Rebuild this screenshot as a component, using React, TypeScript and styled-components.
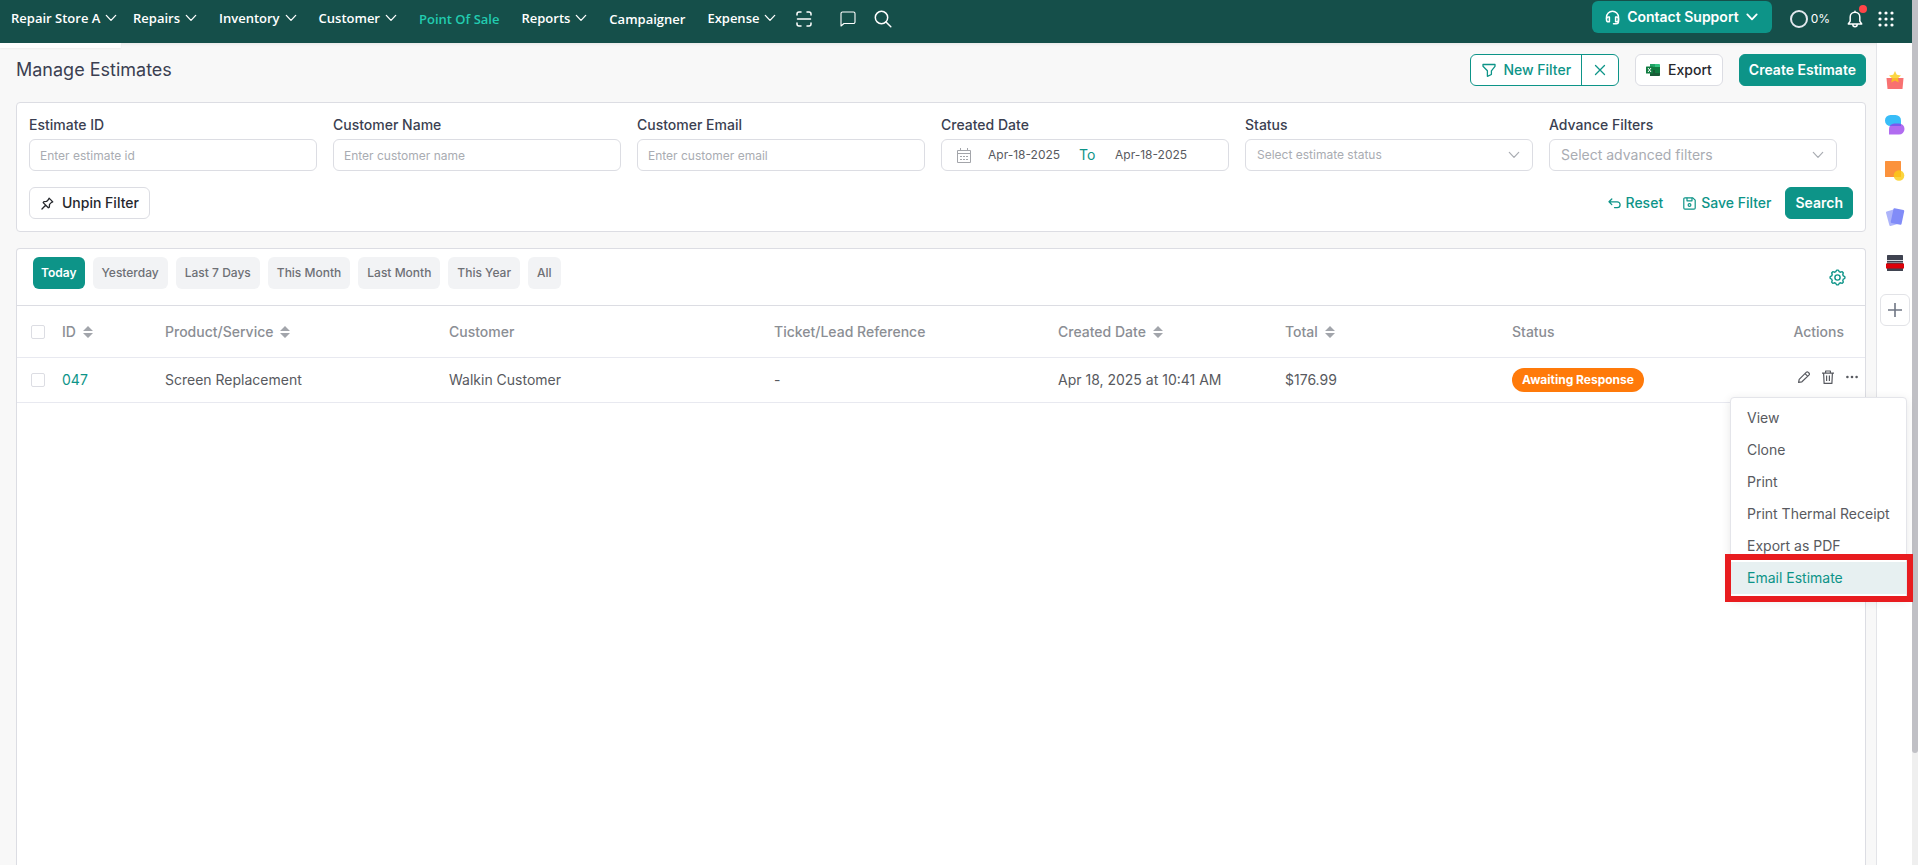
import React from "react";
import styled, { createGlobalStyle, css } from "styled-components";

const color = {
  bar: "#154f4a",
  teal: "#0d9488",
  mint: "#22ccb0",
  page: "#f8f8f8",
  line: "#dcdde3",
  rowLine: "#e8e9f0",
  label: "#3b3f51",
  text: "#585a60",
  head: "#8b8e94",
  hint: "#a9acb2",
};

const GlobalStyle = createGlobalStyle`
  *, *::before, *::after { box-sizing: border-box; }
  body {
    margin: 0;
    background: ${color.page};
    color: ${color.text};
    font-family: Inter, "Liberation Sans", sans-serif;
    font-size: 14px;
    line-height: 20px;
  }
  button, input, select { font: inherit; color: inherit; margin: 0; }
  button { cursor: pointer; }
  a { text-decoration: none; color: inherit; }
  svg { display: block; flex: none; }
`;

/* ---------- frame ---------- */

const Frame = styled.div`
  display: flex;
  height: 100vh;
  overflow: hidden;
`;

const Screen = styled.div`
  flex: 1;
  min-width: 0;
  display: flex;
  flex-direction: column;
`;

const ScrollTrack = styled.div`
  width: 6px;
  background: #efefef;
`;

const ScrollThumb = styled.div`
  height: 87%;
  background: #c0c0c5;
  border-radius: 0 0 3px 3px;
`;

const Body = styled.div`
  flex: 1;
  display: flex;
  min-height: 0;
`;

const Main = styled.main`
  flex: 1;
  min-width: 0;
  display: flex;
  flex-direction: column;
  padding: 11px 10px 0 16px;
`;

/* ---------- top bar ---------- */

const TopBar = styled.header`
  height: 43px;
  flex: none;
  display: flex;
  background: ${color.bar};
  color: #fff;
  box-shadow: 0 1px 3px rgba(0, 0, 0, 0.08);
`;

const Store = styled.div`
  position: relative;
  display: flex;
  width: 121px;
  padding-left: 11px;

  &::after {
    content: "";
    position: absolute;
    left: 0;
    right: 0;
    top: 100%;
    height: 5px;
    background: #fdfdfd;
    box-shadow: 0 1px 2px rgba(0, 0, 0, 0.05);
  }
`;

const Nav = styled.nav`
  flex: 1;
  display: flex;
  gap: 22px;
  padding-left: 12px;
`;

const navItem = css`
  display: flex;
  align-items: center;
  gap: 5px;
  height: 36px;
  padding: 0;
  border: 0;
  background: none;
  font-family: "Open Sans", "Noto Sans", sans-serif;
  font-size: 13px;
  line-height: 18px;
  font-weight: 600;
  white-space: nowrap;
`;

const NavButton = styled.button`
  ${navItem}
  color: #fff;
`;

const NavLink = styled.a<{ $active?: boolean }>`
  ${navItem}
  height: 38px;
  color: ${(p) => (p.$active ? color.mint : "#fff")};
`;

const NavTools = styled.div`
  display: flex;
  align-items: center;
  height: 38px;
  margin-left: -2px;
`;

const NavTool = styled.button<{ $gap: number }>`
  padding: 0;
  margin-right: ${(p) => p.$gap}px;
  border: 0;
  background: none;
  color: #fff;
`;

const BarEnd = styled.div`
  display: flex;
  align-items: center;
  height: 38px;
  padding-right: 18px;
`;

const Support = styled.button`
  display: flex;
  align-items: center;
  gap: 7px;
  height: 32px;
  margin: -4px 18px 0 0;
  padding: 0 14px 0 13px;
  border: 0;
  border-radius: 6px;
  background: ${color.teal};
  color: #fff;
  font-weight: 600;
`;

const Usage = styled.div`
  display: flex;
  align-items: center;
  gap: 3px;
  margin-right: 17px;
  font-size: 12px;
`;

const UsageRing = styled.span`
  width: 18px;
  height: 18px;
  border: 2px solid #e3e8ee;
  border-radius: 50%;
`;

const BellButton = styled.button`
  position: relative;
  margin-right: 15px;
  padding: 0;
  border: 0;
  background: none;
  color: #fff;
`;

const BellDot = styled.span`
  position: absolute;
  top: -5px;
  right: -4px;
  width: 8px;
  height: 8px;
  border-radius: 50%;
  background: #ff4548;
`;

const BareButton = styled.button`
  display: flex;
  align-items: center;
  justify-content: center;
  padding: 0;
  border: 0;
  background: none;
`;

/* ---------- title row ---------- */

const TitleRow = styled.div`
  display: flex;
  align-items: center;
  gap: 16px;
  margin-bottom: 16px;
`;

const Title = styled.h1`
  flex: 1;
  margin: 0;
  font-size: 18px;
  line-height: 24px;
  font-weight: 400;
  color: ${color.label};
`;

const Button = styled.button<{ $kind?: "solid" | "plain" | "text" }>`
  display: flex;
  align-items: center;
  gap: 8px;
  height: 32px;
  padding: 0 10px;
  border: 1px solid ${color.line};
  border-radius: 6px;
  background: #fff;
  color: #26282d;
  font-weight: 500;
  white-space: nowrap;

  ${(p) =>
    p.$kind === "solid" &&
    css`
      padding: 0 9px;
      border-color: ${color.teal};
      background: ${color.teal};
      color: #fff;
      font-weight: 600;
    `}
  ${(p) =>
    p.$kind === "text" &&
    css`
      gap: 5px;
      padding: 0 5px;
      border-color: transparent;
      background: none;
      color: ${color.teal};
    `}
`;

const SplitGroup = styled.div`
  display: flex;
  height: 32px;
  border: 1px solid ${color.teal};
  border-radius: 6px;
  background: #fff;
  color: ${color.teal};
  overflow: hidden;
`;

const SplitButton = styled.button`
  display: flex;
  align-items: center;
  gap: 7px;
  padding: 0 10px 0 11px;
  border: 0;
  background: none;
  font-weight: 500;

  & + & {
    width: 37px;
    padding: 0;
    justify-content: center;
    border-left: 1px solid ${color.teal};
  }
`;

/* ---------- filters ---------- */

const Panel = styled.section`
  border: 1px solid ${color.line};
  border-radius: 4px;
  background: #fff;
`;

const FilterPanel = styled(Panel)`
  padding: 12px;
  margin-bottom: 16px;
`;

const FilterGrid = styled.div`
  display: grid;
  grid-template-columns: repeat(6, 1fr);
`;

const Field = styled.div`
  min-width: 0;
  padding-right: 16px;
`;

const Label = styled.label`
  display: block;
  margin-bottom: 4px;
  color: ${color.label};
  font-weight: 500;
`;

const box = css`
  width: 100%;
  height: 32px;
  border: 1px solid ${color.line};
  border-radius: 6px;
  background: #fff;
`;

const TextInput = styled.input`
  ${box}
  display: block;
  padding: 0 10px;
  font-size: 12px;

  &::placeholder {
    color: ${color.hint};
    opacity: 1;
  }
`;

const SelectWrap = styled.div`
  display: grid;
  align-items: center;
  color: ${color.hint};

  > * {
    grid-area: 1 / 1;
  }
  > svg {
    justify-self: end;
    margin-right: 13px;
    pointer-events: none;
  }
`;

const Select = styled.select<{ $size: number }>`
  ${box}
  appearance: none;
  padding: 0 11px;
  font-size: ${(p) => p.$size}px;
  color: ${color.hint};
`;

const DateBox = styled.div`
  ${box}
  display: flex;
  align-items: center;
  padding-left: 15px;
`;

const DateInput = styled.input`
  width: 75px;
  margin-left: 17px;
  padding: 0;
  border: 0;
  background: none;
  font-size: 12px;
`;

const DateTo = styled.span`
  width: 19px;
  margin-left: 16px;
  color: ${color.teal};
`;

const FilterActions = styled.div`
  display: flex;
  align-items: center;
  gap: 8px;
  margin-top: 16px;
`;

const Spacer = styled.div`
  flex: 1;
`;

/* ---------- table ---------- */

const TablePanel = styled(Panel)`
  flex: 1;
  border-bottom: 0;
  border-radius: 4px 4px 0 0;
`;

const RangeRow = styled.div`
  display: flex;
  align-items: flex-start;
  gap: 8px;
  height: 57px;
  padding: 8px 16px 0;
  border-bottom: 1px solid ${color.line};
`;

const Range = styled.button<{ $active?: boolean }>`
  height: 32px;
  padding: 0 ${(p) => (p.$active ? 8 : 9)}px;
  border: 0;
  border-radius: 6px;
  background: ${(p) => (p.$active ? color.teal : "#f2f3f5")};
  color: ${(p) => (p.$active ? "#fff" : "#6e7076")};
  font-size: 12px;
  font-weight: ${(p) => (p.$active ? 600 : 500)};
`;

const Settings = styled(BareButton)`
  margin: 12px 3px 0 auto;
  color: ${color.teal};
`;

const Table = styled.table`
  width: 100%;
  table-layout: fixed;
  border-collapse: separate;
  border-spacing: 0;
`;

const Th = styled.th`
  height: 52px;
  padding: 0;
  border-bottom: 1px solid ${color.rowLine};
  color: ${color.head};
  font-weight: 500;
  text-align: left;
`;

const Td = styled.td`
  height: 45px;
  padding: 0;
  border-bottom: 1px solid ${color.rowLine};
`;

const HeadLabel = styled.span<{ $end?: boolean }>`
  display: flex;
  align-items: center;
  gap: 7px;
  justify-content: ${(p) => (p.$end ? "flex-end" : "flex-start")};
  padding-right: ${(p) => (p.$end ? 21 : 0)}px;
`;

const Check = styled.input`
  display: block;
  appearance: none;
  width: 14px;
  height: 14px;
  margin: 0 0 0 14px;
  border: 1px solid ${color.line};
  border-radius: 2px;
  background: #fff;
`;

const IdLink = styled.a`
  color: ${color.teal};
`;

const Badge = styled.span`
  display: inline-block;
  padding: 0 10px;
  border-radius: 12px;
  background: #ff7a0a;
  color: #fff;
  font-size: 12px;
  line-height: 24px;
  font-weight: 700;
  vertical-align: middle;
`;

const RowActions = styled.div`
  position: relative;
  display: flex;
  justify-content: flex-end;
  gap: 12px;
  padding: 0 7px 6px 0;
`;

const Menu = styled.ul`
  position: absolute;
  top: 27px;
  right: -42px;
  z-index: 2;
  width: 177px;
  margin: 0;
  padding: 4px 0;
  border: 1px solid #e4e5ea;
  border-radius: 4px;
  background: #fff;
  box-shadow: 0 2px 10px rgba(0, 0, 0, 0.1);
  list-style: none;
`;

const MenuItem = styled.li`
  position: relative;
`;

const MenuButton = styled.button<{ $active?: boolean }>`
  display: block;
  width: 100%;
  height: 32px;
  padding: 0 16px;
  border: 0;
  background: ${(p) => (p.$active ? "#e7f0f1" : "none")};
  color: ${(p) => (p.$active ? color.teal : color.text)};
  text-align: left;
  white-space: nowrap;
`;

const Highlight = styled.span`
  position: absolute;
  inset: -8px -7px -8px -6px;
  border: 6px solid #e81c1f;
  pointer-events: none;
`;

/* ---------- right rail ---------- */

const Rail = styled.aside`
  width: 36px;
  flex: none;
  display: flex;
  flex-direction: column;
  align-items: center;
  gap: 16px;
  padding: 21px 0 0 1px;
  border-left: 1px solid #e3e4e8;
  background: #fff;
`;

const RailButton = styled.button<{ $boxed?: boolean }>`
  display: flex;
  align-items: center;
  justify-content: center;
  width: 30px;
  height: ${(p) => (p.$boxed ? 32 : 30)}px;
  padding: 0;
  border: ${(p) => (p.$boxed ? "1px solid #e2e3e7" : "0")};
  border-radius: 6px;
  background: none;
  color: #6f7684;
`;

/* ---------- icons ---------- */

const Chevron = ({ w = 12, s = 1.3 }: { w?: number; s?: number }) => (
  <svg width={w} height={w} viewBox="0 0 12 12" fill="none" stroke="currentColor" strokeWidth={s} strokeLinecap="round" strokeLinejoin="round">
    <path d="M1.3 3.4 6 8.4l4.7-5" />
  </svg>
);

const ScanIcon = () => (
  <svg width="16" height="16" viewBox="0 0 16 16" fill="none" stroke="currentColor" strokeWidth="1.5" strokeLinecap="round">
    <path d="M1 4V3a2 2 0 0 1 2-2h2M11 1h2a2 2 0 0 1 2 2v1M15 12v1a2 2 0 0 1-2 2h-2M5 15H3a2 2 0 0 1-2-2v-1M1.5 8h13" />
  </svg>
);

const CommentIcon = () => (
  <svg width="16" height="16" viewBox="0 0 16 16" fill="none" stroke="currentColor" strokeWidth="1.1" strokeLinejoin="round">
    <path d="M1 15V2.5A1.5 1.5 0 0 1 2.5 1h11A1.5 1.5 0 0 1 15 2.5V11a1.5 1.5 0 0 1-1.5 1.5H4z" />
  </svg>
);

const SearchIcon = () => (
  <svg width="18" height="18" viewBox="0 0 18 18" fill="none" stroke="currentColor" strokeWidth="1.5" strokeLinecap="round">
    <circle cx="7.5" cy="7.5" r="6.2" />
    <path d="m12 12 4.8 4.8" />
  </svg>
);

const HeadsetIcon = () => (
  <svg width="15" height="15" viewBox="0 0 15 15" fill="none" stroke="currentColor" strokeWidth="1.5" strokeLinecap="round" strokeLinejoin="round">
    <path d="M1.5 8.5V7.2a6 6 0 0 1 12 0v4.3a2.2 2.2 0 0 1-2.2 2.2H8.5" />
    <path d="M1.5 9c0-1.2.9-2 2-2h.9v4.8h-.9c-1.2 0-2-.8-2-1.8zM13.5 9c0-1.2-.9-2-2-2h-.9v4.8h.9c1.2 0 2-.8 2-1.8z" />
  </svg>
);

const BellIcon = () => (
  <svg width="16" height="18" viewBox="0 0 16 18" fill="none" stroke="currentColor" strokeWidth="1.5" strokeLinejoin="round" strokeLinecap="round">
    <path d="M8 1.2v1M8 2.2A4.8 4.8 0 0 0 3.2 7v4.2L1.3 14h13.4l-1.9-2.8V7A4.8 4.8 0 0 0 8 2.2zM5.8 14.5a2.2 2.2 0 0 0 4.4 0" />
  </svg>
);

const AppsIcon = () => (
  <svg width="16" height="16" viewBox="0 0 16 16" fill="#fff">
    {[2, 8, 14].map((y) => [2, 8, 14].map((x) => <circle key={`${x}-${y}`} cx={x} cy={y} r="1.6" />))}
  </svg>
);

const FunnelIcon = () => (
  <svg width="14" height="14" viewBox="0 0 14 14" fill="none" stroke="currentColor" strokeWidth="1.3" strokeLinejoin="round">
    <path d="M1 1.5h12v1.8L9.4 7.8v3.7l-4 1.8V7.8L1 3.3z" />
  </svg>
);

const CloseIcon = () => (
  <svg width="12" height="12" viewBox="0 0 12 12" fill="none" stroke="currentColor" strokeWidth="1.3" strokeLinecap="round">
    <path d="m1.5 1.5 9 9M10.5 1.5l-9 9" />
  </svg>
);

const ExcelIcon = () => (
  <svg width="14" height="12" viewBox="0 0 14 12">
    <path d="M4 0h5v6H4z" fill="#21a366" />
    <path d="M9 0h4.2a.8.8 0 0 1 .8.8V3H9z" fill="#33c481" />
    <path d="M9 3h5v3H9zM4 3h5v3H4z" fill="#107c41" />
    <path d="M4 6h10v5.2a.8.8 0 0 1-.8.8H4z" fill="#185c37" />
    <path d="M9 6h5v3H9z" fill="#107c41" />
    <rect y="2.5" width="7" height="7" rx=".6" fill="#107c41" />
    <path d="m2 4 3 4M5 4 2 8" stroke="#fff" strokeWidth="1" />
  </svg>
);

const CalendarIcon = () => (
  <svg width="14" height="15" viewBox="0 0 14 15" fill="none" stroke="#a3a5aa" strokeWidth="1">
    <path d="M.5 2.5h13v12H.5zM.5 5.5h13M3.5 0v3M10.5 0v3" />
    <path d="M3 8.500h2M6 8.500h2M9 8.500h2M3 11.500h2M6 11.500h2M9 11.500h2" />
  </svg>
);

const PinIcon = () => (
  <svg width="14" height="14" viewBox="-1 -1 15 15" fill="none" stroke="currentColor" strokeWidth="1.4" strokeLinejoin="round" strokeLinecap="round">
    <path d="M8.7 1.3 12.7 5.3 11.3 5.8 9.2 8 9 10.9 7.9 11.6 2.4 6.1 3.2 5.1 6 4.8 8.1 2.7zM5 9l-3.9 3.9" />
  </svg>
);

const UndoIcon = () => (
  <svg width="13" height="11" viewBox="0 0 13 11" fill="none" stroke="currentColor" strokeWidth="1.3" strokeLinecap="round" strokeLinejoin="round">
    <path d="M3.8 1 1 3.8l2.8 2.8M1 3.8h8.2a2.9 2.9 0 0 1 0 5.8H6.5" />
  </svg>
);

const SaveIcon = () => (
  <svg width="13" height="13" viewBox="0 0 13 13" fill="none" stroke="currentColor" strokeWidth="1.2" strokeLinejoin="round">
    <path d="M.8 2A1.2 1.2 0 0 1 2 .8h7.8l2.4 2.4V11a1.2 1.2 0 0 1-1.2 1.2H2A1.2 1.2 0 0 1 .8 11z" />
    <path d="M4 .8v3h5v-3" />
    <circle cx="6.5" cy="8" r="1.4" />
  </svg>
);

const SortIcon = () => (
  <svg width="10" height="12" viewBox="0 0 10 12" fill="#a2a5ab">
    <path d="M5 0 10 5H0zM5 12 0 7h10z" />
  </svg>
);

const gearPath = Array.from({ length: 64 }, (_, i) => {
  const a = (i / 64) * Math.PI * 2;
  const r = 6.7 + 0.7 * Math.max(-1, Math.min(1, 2 * Math.cos(a * 8)));
  return `${i ? "L" : "M"}${(8.5 + r * Math.sin(a)).toFixed(2)} ${(8.5 - r * Math.cos(a)).toFixed(2)}`;
}).join("");

const GearIcon = () => (
  <svg width="17" height="17" viewBox="0 0 17 17" fill="none" stroke="currentColor" strokeWidth="1.4" strokeLinejoin="round">
    <path d={`${gearPath}Z`} />
    <circle cx="8.5" cy="8.5" r="2.6" />
  </svg>
);

const PencilIcon = () => (
  <svg width="12" height="14" viewBox="1 0 12 14" fill="none" stroke="currentColor" strokeWidth="1.2" strokeLinejoin="round">
    <path d="m1.6 12.4.6-3 7-7a1.5 1.5 0 0 1 2.1 0l.6.6a1.5 1.5 0 0 1 0 2.1l-7 6.7zM8 3.6l2.6 2.6" />
  </svg>
);

const TrashIcon = () => (
  <svg width="12" height="14" viewBox="0 0 12 14" fill="none" stroke="currentColor" strokeWidth="1.2" strokeLinejoin="round">
    <path d="M0 3.2h12M3.6 3.2V1h4.8v2.2M1.6 3.2l.5 10.2h7.8l.5-10.2M4.6 5.5V11M7.4 5.5V11" />
  </svg>
);

const DotsIcon = () => (
  <svg width="12" height="14" viewBox="0 0 12 14" fill="currentColor">
    <circle cx="1.4" cy="7" r="1.3" />
    <circle cx="6" cy="7" r="1.3" />
    <circle cx="10.6" cy="7" r="1.3" />
  </svg>
);

const StarBagIcon = () => (
  <svg width="18" height="22" viewBox="0 0 18 22">
    <path d="M.5 10h17l-1 11h-15z" fill="#f87171" />
    <path d="m9 3 1.8 3.8 4.2.6-3 2.9.7 4.2-3.7-2-3.7 2 .7-4.2-3-2.9 4.2-.6z" fill="#facc15" opacity=".8" />
  </svg>
);

const ChatsIcon = () => (
  <svg width="20" height="22" viewBox="0 0 20 22">
    <path d="M5.5 1h5A5.5 5.5 0 0 1 16 6.5V12H5.5a5.5 5.5 0 0 1 0-11z" fill="#38bdf8" />
    <path d="M4 20.5V15a5.5 5.5 0 0 1 5.5-5.5H14a5.5 5.5 0 0 1 0 11z" fill="#9333ea" opacity=".72" />
  </svg>
);

const NoteIcon = () => (
  <svg width="20" height="20" viewBox="0 0 20 20">
    <rect width="16" height="16" rx=".5" fill="#fb923c" />
    <circle cx="14" cy="14.5" r="5.3" fill="#facc15" opacity=".82" />
  </svg>
);

const CardsIcon = () => (
  <svg width="20" height="20" viewBox="0 0 20 20">
    <rect x="2.5" y="3" width="11" height="15" rx="1" fill="#818cf8" opacity=".65" transform="rotate(-15 8 10.5)" />
    <rect x="7" y="2" width="11" height="15" rx="1" fill="#818cf8" transform="rotate(12 12.5 9.5)" />
  </svg>
);

const DrawerIcon = () => (
  <svg width="18" height="16" viewBox="0 0 18 16">
    <rect x="1" width="16" height="16" rx=".6" fill="#3f4350" />
    <path d="M1 5.5h16" stroke="#d5d8dd" strokeWidth="1" />
    <path d="M1 7.5h16" stroke="#8a8e96" strokeWidth="1" />
    <rect y="8.5" width="18" height="5" fill="#dc0008" />
  </svg>
);

const PlusIcon = () => (
  <svg width="14" height="14" viewBox="0 0 14 14" stroke="currentColor" strokeWidth="1.6">
    <path d="M7 0v14M0 7h14" />
  </svg>
);

/* ---------- data ---------- */

const navItems = [
  { label: "Repairs", menu: true },
  { label: "Inventory", menu: true },
  { label: "Customer", menu: true },
  { label: "Point Of Sale", active: true },
  { label: "Reports", menu: true },
  { label: "Campaigner" },
  { label: "Expense", menu: true },
];

const textFilters = [
  { id: "estimate-id", label: "Estimate ID", hint: "Enter estimate id" },
  { id: "customer-name", label: "Customer Name", hint: "Enter customer name" },
  { id: "customer-email", label: "Customer Email", hint: "Enter customer email" },
];

const ranges = ["Today", "Yesterday", "Last 7 Days", "This Month", "Last Month", "This Year", "All"];

const columns = [
  { label: "ID", width: 103, sort: true },
  { label: "Product/Service", width: 284, sort: true },
  { label: "Customer", width: 325 },
  { label: "Ticket/Lead Reference", width: 284 },
  { label: "Created Date", width: 227, sort: true },
  { label: "Total", width: 227, sort: true },
  { label: "Status", width: 200 },
  { label: "Actions", width: 153, end: true },
];

const menuItems = ["View", "Clone", "Print", "Print Thermal Receipt", "Export as PDF", "Email Estimate"];

const railItems = [
  { label: "Rewards", icon: <StarBagIcon /> },
  { label: "Messages", icon: <ChatsIcon /> },
  { label: "Notes", icon: <NoteIcon /> },
  { label: "Cards", icon: <CardsIcon /> },
  { label: "Cash drawer", icon: <DrawerIcon /> },
];

/* ---------- sections ---------- */

const Header = () => (
  <TopBar>
    <Store>
      <NavButton>
        Repair Store A <Chevron />
      </NavButton>
    </Store>
    <Nav>
      {navItems.map((n) =>
        n.menu ? (
          <NavButton key={n.label}>
            {n.label} <Chevron />
          </NavButton>
        ) : (
          <NavLink key={n.label} href="#" $active={n.active}>
            {n.label}
          </NavLink>
        )
      )}
      <NavTools>
        <NavTool $gap={28} aria-label="Scan"><ScanIcon /></NavTool>
        <NavTool $gap={18} aria-label="Messages"><CommentIcon /></NavTool>
        <NavTool $gap={0} aria-label="Search"><SearchIcon /></NavTool>
      </NavTools>
    </Nav>
    <BarEnd>
      <Support>
        <HeadsetIcon /> Contact Support <Chevron s={1.8} />
      </Support>
      <Usage>
        <UsageRing /> 0%
      </Usage>
      <BellButton aria-label="Notifications">
        <BellIcon />
        <BellDot />
      </BellButton>
      <BareButton aria-label="Apps"><AppsIcon /></BareButton>
    </BarEnd>
  </TopBar>
);

const Filters = () => (
  <FilterPanel>
    <FilterGrid>
      {textFilters.map((f) => (
        <Field key={f.id}>
          <Label htmlFor={f.id}>{f.label}</Label>
          <TextInput id={f.id} placeholder={f.hint} />
        </Field>
      ))}
      <Field>
        <Label htmlFor="date-from">Created Date</Label>
        <DateBox>
          <CalendarIcon />
          <DateInput id="date-from" defaultValue="Apr-18-2025" />
          <DateTo>To</DateTo>
          <DateInput aria-label="Created date to" defaultValue="Apr-18-2025" />
        </DateBox>
      </Field>
      <Field>
        <Label htmlFor="status">Status</Label>
        <SelectWrap>
          <Select id="status" $size={12}>
            <option>Select estimate status</option>
          </Select>
          <Chevron s={1.2} />
        </SelectWrap>
      </Field>
      <Field>
        <Label htmlFor="advanced">Advance Filters</Label>
        <SelectWrap>
          <Select id="advanced" $size={14}>
            <option>Select advanced filters</option>
          </Select>
          <Chevron s={1.2} />
        </SelectWrap>
      </Field>
    </FilterGrid>
    <FilterActions>
      <Button><PinIcon /> Unpin Filter</Button>
      <Spacer />
      <Button $kind="text"><UndoIcon /> Reset</Button>
      <Button $kind="text"><SaveIcon /> Save Filter</Button>
      <Button $kind="solid">Search</Button>
    </FilterActions>
  </FilterPanel>
);

const Estimates = () => (
  <TablePanel>
    <RangeRow>
      {ranges.map((r, i) => (
        <Range key={r} $active={i === 0}>{r}</Range>
      ))}
      <Settings aria-label="Table settings"><GearIcon /></Settings>
    </RangeRow>
    <Table>
      <colgroup>
        <col width={45} />
        {columns.map((c) => (
          <col key={c.label} width={c.width} />
        ))}
      </colgroup>
      <thead>
        <tr>
          <Th><Check type="checkbox" aria-label="Select all estimates" /></Th>
          {columns.map((c) => (
            <Th key={c.label}>
              <HeadLabel $end={c.end}>
                {c.label} {c.sort && <SortIcon />}
              </HeadLabel>
            </Th>
          ))}
        </tr>
      </thead>
      <tbody>
        <tr>
          <Td><Check type="checkbox" aria-label="Select estimate 047" /></Td>
          <Td><IdLink href="#">047</IdLink></Td>
          <Td>Screen Replacement</Td>
          <Td>Walkin Customer</Td>
          <Td>-</Td>
          <Td>Apr 18, 2025 at 10:41 AM</Td>
          <Td>$176.99</Td>
          <Td><Badge>Awaiting Response</Badge></Td>
          <Td>
            <RowActions>
              <BareButton aria-label="Edit"><PencilIcon /></BareButton>
              <BareButton aria-label="Delete"><TrashIcon /></BareButton>
              <BareButton aria-label="More actions"><DotsIcon /></BareButton>
              <Menu>
                {menuItems.map((m) => {
                  const active = m === "Email Estimate";
                  return (
                    <MenuItem key={m}>
                      <MenuButton $active={active}>{m}</MenuButton>
                      {active && <Highlight />}
                    </MenuItem>
                  );
                })}
              </Menu>
            </RowActions>
          </Td>
        </tr>
      </tbody>
    </Table>
  </TablePanel>
);

export default function App() {
  return (
    <Frame>
      <GlobalStyle />
      <Screen>
        <Header />
        <Body>
          <Main>
            <TitleRow>
              <Title>Manage Estimates</Title>
              <SplitGroup>
                <SplitButton><FunnelIcon /> New Filter</SplitButton>
                <SplitButton aria-label="Clear filter"><CloseIcon /></SplitButton>
              </SplitGroup>
              <Button><ExcelIcon /> Export</Button>
              <Button $kind="solid">Create Estimate</Button>
            </TitleRow>
            <Filters />
            <Estimates />
          </Main>
          <Rail>
            {railItems.map((r) => (
              <RailButton key={r.label} aria-label={r.label}>{r.icon}</RailButton>
            ))}
            <RailButton $boxed aria-label="Add"><PlusIcon /></RailButton>
          </Rail>
        </Body>
      </Screen>
      <ScrollTrack>
        <ScrollThumb />
      </ScrollTrack>
    </Frame>
  );
}
